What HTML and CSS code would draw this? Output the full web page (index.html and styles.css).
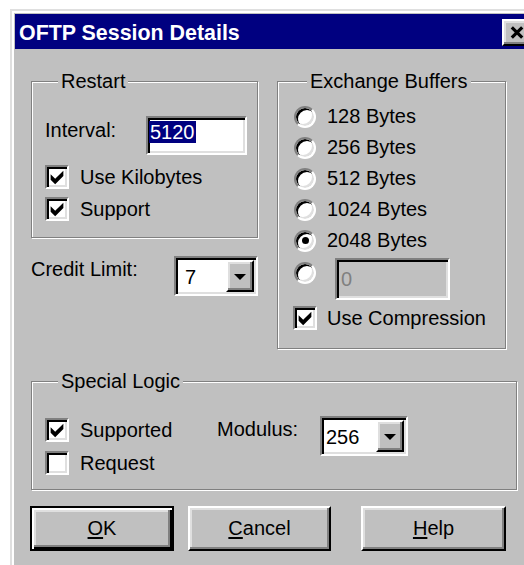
FILE: index.html
```html
<!DOCTYPE html>
<html lang="en">
<head>
<meta charset="utf-8">
<title>OFTP Session Details</title>
<link rel="stylesheet" href="styles.css">
</head>
<body>
<div class="dialog">
  <div class="titlebar">
    <span class="title">OFTP Session Details</span>
    <button class="close raised" type="button" aria-label="Close">
      <svg width="14" height="13" viewBox="0 0 14 13"><path d="M1.8 1.3 L12.2 11.7 M12.2 1.3 L1.8 11.7" stroke="#000" stroke-width="3.2" fill="none"/></svg>
    </button>
  </div>

  <div class="client">
    <div class="top">
      <div class="col-left">
        <fieldset class="group restart">
          <legend>Restart</legend>
          <div class="field-row">
            <span class="field-label">Interval:</span>
            <div class="textbox interval sunken"><span class="sel">5120</span></div>
          </div>
          <div class="check first">
            <span class="box sunken"><svg width="20" height="20" viewBox="1 1 11 11"><polygon points="3,5 5.5,7.5 10,3 10,6 5.5,10.5 3,8"/></svg></span>
            <span>Use Kilobytes</span>
          </div>
          <div class="check">
            <span class="box sunken"><svg width="20" height="20" viewBox="1 1 11 11"><polygon points="3,5 5.5,7.5 10,3 10,6 5.5,10.5 3,8"/></svg></span>
            <span>Support</span>
          </div>
        </fieldset>

        <div class="credit">
          <span class="field-label">Credit Limit:</span>
          <div class="combo credit-combo sunken">
            <span class="val">7</span>
            <span class="drop raised"><span class="arrow"></span></span>
          </div>
        </div>
      </div>

      <fieldset class="group buffers">
        <legend>Exchange Buffers</legend>
        <div class="radio-row"><span class="radio"></span><span>128 Bytes</span></div>
        <div class="radio-row"><span class="radio"></span><span>256 Bytes</span></div>
        <div class="radio-row"><span class="radio"></span><span>512 Bytes</span></div>
        <div class="radio-row"><span class="radio"></span><span>1024 Bytes</span></div>
        <div class="radio-row"><span class="radio on"></span><span>2048 Bytes</span></div>
        <div class="radio-row custom">
          <span class="radio"></span>
          <div class="textbox disabled sunken"><span>0</span></div>
        </div>
        <div class="check compress">
          <span class="box sunken"><svg width="20" height="20" viewBox="1 1 11 11"><polygon points="3,5 5.5,7.5 10,3 10,6 5.5,10.5 3,8"/></svg></span>
          <span>Use Compression</span>
        </div>
      </fieldset>
    </div>

    <fieldset class="group special">
      <legend>Special Logic</legend>
      <div class="special-body">
        <div class="checks">
          <div class="check">
            <span class="box sunken"><svg width="20" height="20" viewBox="1 1 11 11"><polygon points="3,5 5.5,7.5 10,3 10,6 5.5,10.5 3,8"/></svg></span>
            <span>Supported</span>
          </div>
          <div class="check second">
            <span class="box sunken"></span>
            <span>Request</span>
          </div>
        </div>
        <span class="field-label">Modulus:</span>
        <div class="combo modulus-combo sunken">
          <span class="val">256</span>
          <span class="drop raised"><span class="arrow"></span></span>
        </div>
      </div>
    </fieldset>

    <div class="buttons">
      <button class="btn default" type="button"><u>O</u>K</button>
      <button class="btn cancel" type="button"><u>C</u>ancel</button>
      <button class="btn help" type="button"><u>H</u>elp</button>
    </div>
  </div>
</div>
</body>
</html>
```
FILE: styles.css
```css
* { box-sizing: border-box; }

html, body { margin: 0; }

body {
  background: #fff;
  overflow: hidden;
  font-family: "Liberation Sans", Arial, sans-serif;
  font-size: 20px;
  line-height: 23px;
  color: #000;
}

/* 3D bevels */
.raised {
  background: #c0c0c0;
  border: 2px solid;
  border-color: #fff #000 #000 #fff;
  box-shadow: inset -2px -2px #808080, inset 2px 2px #dfdfdf;
}

.sunken {
  background: #fff;
  border: 2px solid;
  border-color: #808080 #fff #fff #808080;
  box-shadow: inset 2px 2px #000, inset -2px -2px #dfdfdf;
}

/* window frame */
.dialog {
  margin: 9px 0 0 10px;
  width: 532px;
  background: #c0c0c0;
  border: 2px solid;
  border-color: #dfdfdf #000 #000 #dfdfdf;
  box-shadow: inset 2px 2px #fff, inset -2px -2px #808080;
  padding: 3px;
}

.titlebar {
  height: 35px;
  background: #000080;
  display: flex;
  align-items: center;
  justify-content: space-between;
  padding: 0 2px 0 4px;
}

.title {
  color: #fff;
  font-weight: bold;
  font-size: 21.4px;
  line-height: 25px;
  margin-top: 3px;
}

.close {
  width: 33px;
  height: 27px;
  margin-top: 2px;
  padding: 0 3px 0 0;
  display: flex;
  align-items: center;
  justify-content: center;
}

.client {
  padding: 21px 20px 30px 16px;
}

.top {
  display: flex;
  align-items: flex-start;
  gap: 19px;
}

.col-left { width: 227px; }

/* etched group boxes */
.group {
  margin: 0;
  min-width: 0;
  border: 1px solid #808080;
  box-shadow: inset 1px 1px #fff, 1px 1px #fff;
}

.group legend {
  margin-left: 13px;
  padding: 0 3px;
  background: #c0c0c0;
  line-height: 23px;
}

.restart { padding: 23px 0 16px 13px; }

.field-label {
  padding-top: 2px;
  white-space: nowrap;
}

.field-row {
  display: flex;
  align-items: flex-start;
}

.field-row .field-label { width: 101px; padding-top: 3px; }

.textbox { height: 39px; }

.interval {
  width: 101px;
  padding: 3px 0 0 1px;
}

.sel {
  display: inline-block;
  background: #000080;
  color: #fff;
  line-height: 22px;
  padding: 0 1px;
}

.check {
  display: flex;
  align-items: center;
  gap: 11px;
  height: 24px;
  margin-top: 8px;
  white-space: nowrap;
}

.check.first { margin-top: 10px; }

.box {
  width: 24px;
  height: 24px;
  flex: none;
  display: block;
}

.box svg { display: block; }

.credit {
  display: flex;
  align-items: flex-start;
  justify-content: space-between;
  margin-top: 18px;
}

.combo {
  display: flex;
  justify-content: space-between;
  height: 40px;
  padding: 2px;
}

.combo .val { padding-top: 6px; }

.credit-combo { width: 84px; }
.credit-combo .val { padding-left: 7px; }

.drop {
  width: 28px;
  height: 32px;
  display: flex;
  align-items: center;
  justify-content: center;
}

.arrow {
  width: 0;
  height: 0;
  border-left: 6px solid transparent;
  border-right: 6px solid transparent;
  border-top: 6px solid #000;
  margin-top: 1px;
}

/* Exchange Buffers */
.buffers {
  width: 229px;
  padding: 8px 0 18px 16px;
}

.radio-row {
  display: flex;
  align-items: center;
  gap: 11px;
  height: 31px;
  white-space: nowrap;
}

.radio {
  width: 22px;
  height: 22px;
  flex: none;
  border-radius: 50%;
  background: #fff;
  border: 2px solid;
  border-color: #808080 #fff #fff #808080;
  box-shadow: inset 2px 2px #000, inset -2px -2px #dfdfdf;
  display: flex;
  align-items: center;
  justify-content: center;
}

.radio.on::after {
  content: "";
  width: 7px;
  height: 7px;
  border-radius: 50%;
  background: #000;
}

.radio-row.custom {
  height: 42px;
  margin-top: 2px;
  align-items: flex-start;
  gap: 19px;
}

.radio-row.custom .radio { margin-top: 4px; }

.textbox.disabled {
  width: 115px;
  height: 42px;
  background: #c0c0c0;
  color: #808080;
  padding: 8px 0 0 4px;
}

.check.compress {
  margin-top: 6px;
  gap: 10px;
}

.compress .box { margin-left: -1px; }

/* Special Logic */
.special {
  margin-top: 21px;
  padding: 23px 0 14px 13px;
}

.special-body {
  display: flex;
  align-items: flex-start;
}

.checks {
  width: 172px;
  padding-top: 2px;
}

.checks .check { margin-top: 0; }
.checks .check.second { margin-top: 9px; }

.special-body .field-label { width: 103px; }

.modulus-combo { width: 88px; }
.modulus-combo .val { padding-left: 2px; }

/* push buttons */
.buttons {
  display: flex;
  margin-top: 16px;
}

.btn {
  font: inherit;
  color: #000;
  height: 45px;
  background: #c0c0c0;
  border: 2px solid;
  border-color: #fff #000 #000 #fff;
  box-shadow: inset -2px -2px #808080, inset 2px 2px #dfdfdf;
  padding: 0;
}

.btn u { text-underline-offset: 2px; }

.btn.default {
  width: 144px;
  margin-left: -1px;
  border-color: #000;
  box-shadow: inset 2px 2px #fff, inset -2px -2px #000, inset -4px -4px #808080, inset 4px 4px #dfdfdf;
}

.btn.cancel { width: 143px; margin-left: 14px; }
.btn.help { width: 145px; margin-left: 30px; }
```
